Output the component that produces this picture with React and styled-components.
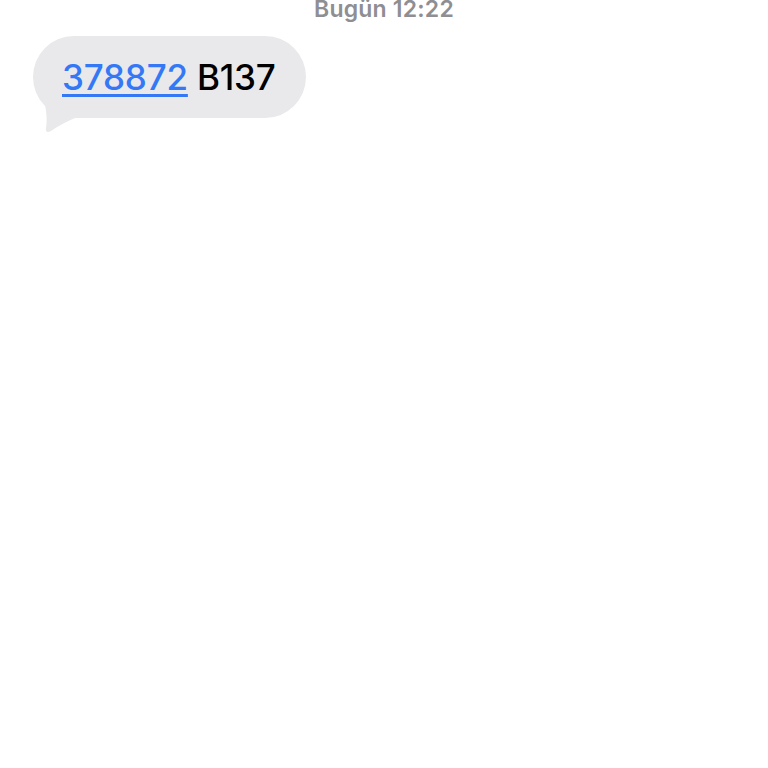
import React from 'react';
import styled, { createGlobalStyle } from 'styled-components';

const GlobalStyle = createGlobalStyle`
  html, body {
    margin: 0;
    padding: 0;
    background: #ffffff;
  }
  body {
    font-family: Inter, "Liberation Sans", sans-serif;
  }
`;

const Page = styled.div`
  width: 768px;
  height: 768px;
  overflow: hidden;
  background: #ffffff;
`;

const Header = styled.div`
  display: flex;
  justify-content: center;
  height: 22px;
  margin-top: -3px;
`;

const Timestamp = styled.div`
  padding: 0 58px;
  color: #8e8e93;
  font-size: 23px;
  line-height: 24px;
  font-weight: 600;
  letter-spacing: 0.2px;
`;

const Thread = styled.div`
  display: flex;
  flex-direction: column;
  align-items: flex-start;
  padding: 17px 0 0 33px;
`;

const Bubble = styled.div`
  position: relative;
  display: flex;
  align-items: center;
  height: 82px;
  padding: 0 30px 0 29px;
  border-radius: 41px;
  background: #e9e9eb;
  color: #000000;
  font-size: 35px;
  font-weight: 500;
  letter-spacing: -0.2px;
  box-sizing: border-box;
`;

const Code = styled.span`
  color: #3478f6;
  text-decoration: underline;
  text-decoration-thickness: 2.5px;
  text-underline-offset: 4px;
  margin-right: 9px;
`;

const Tail = styled.svg`
  position: absolute;
  left: 6px;
  bottom: -15px;
`;

export default function App() {
  return (
    <Page>
      <GlobalStyle />
      <Header>
        <Timestamp>Bugün 12:22</Timestamp>
      </Header>
      <Thread>
        <Bubble>
          <Code>378872</Code>
          B137
          <Tail width="36" height="28" viewBox="0 0 36 28">
            <path d="M6 0 C8 10 8 18 7 23 C6 27 9 28 12 26 C18 22 26 17 36 13 L36 0 Z" fill="#e9e9eb" />
          </Tail>
        </Bubble>
      </Thread>
    </Page>
  );
}
